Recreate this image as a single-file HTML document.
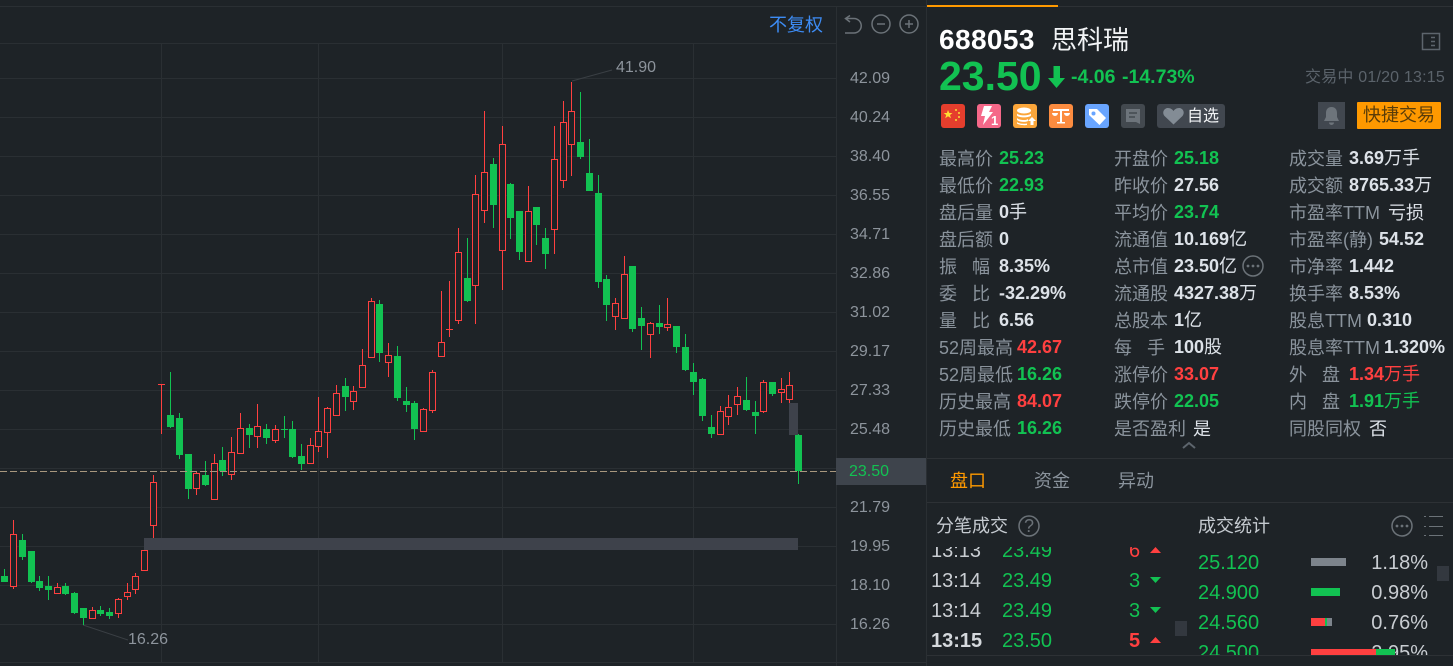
<!DOCTYPE html>
<html><head><meta charset="utf-8"><style>
html,body{margin:0;padding:0;background:#1e2327;width:1453px;height:666px;overflow:hidden}
body{position:relative;font-family:"Liberation Sans","Noto Sans CJK SC",sans-serif}
svg{position:absolute;left:0;top:0}
.t{position:absolute;white-space:nowrap;line-height:27px;height:27px;font-size:18px}
.l{color:#8a939c;margin-top:1px}
.v{font-size:18px;font-weight:bold;color:#dde2e8}
.g{color:#12c252}.r{color:#ff4040}
.v i{font-style:normal;font-weight:normal}
.a{position:absolute;left:850px;color:#8d949c;font-size:16px;line-height:20px;white-space:nowrap}
.n{position:absolute;font-size:20px;line-height:24px;white-space:nowrap}
#list,#stat{position:absolute;overflow:hidden;top:547px;height:108px}
#list{left:927px;width:250px}
#stat{left:1190px;width:245px}
</style></head><body>
<svg width="1453" height="666" viewBox="0 0 1453 666">
<path fill="none" stroke="#2a2f33" d="M0 6.5H927M0 43.5H836M0 78.5H836M0 117.5H836M0 156.5H836M0 195.5H836M0 234.5H836M0 273.5H836M0 312.5H836M0 351.5H836M0 390.5H836M0 429.5H836M0 468.5H836M0 507.5H836M0 546.5H836M0 585.5H836M0 624.5H836M0 662.5H926M161.5 43V662M318.5 43V662M502.5 43V662M693.5 43V662M836.5 7V666M926.5 0V666"/>
<path fill="none" stroke="#2d3135" stroke-width="1" d="M927 6.5H1453M927 458.5H1453M927 502.5H1453M927 655.5H1453"/>
<path stroke="#ff9900" stroke-width="2" d="M927 6H1058"/>
<path fill="none" stroke="#3a3f44" d="M83 625L128 640M572 81L612 70"/>
<path fill="none" stroke="#ff4040" d="M13.5 520V589M57.5 583V594M92.5 607V619M118.5 598V618M127.5 583V600M135.5 573V594M144.5 549V571M153.5 475V539M161.5 384V434M196.5 472V495M214.5 454V499M231.5 437V480M240.5 413V453M257.5 404V448M275.5 425V443M310.5 438V463M318.5 397V452M327.5 407V458M336.5 385V415M353.5 386V410M362.5 349V387M371.5 298V357M388.5 343V377M423.5 408V432M432.5 370V413M441.5 291V357M449.5 281V337M458.5 228V324M475.5 175V324M484.5 111V223M502.5 126V290M528.5 186V261M554.5 126V254M563.5 101V188M571.5 82V176M615.5 298V330M624.5 256V318M650.5 322V358M667.5 298V331M720.5 406V434M728.5 395V425M737.5 387V415M763.5 380V413M781.5 378V403M789.5 372V403M158 384.5H165M446 329.5H453"/>
<path fill="none" stroke="#12c252" d="M4.5 569V582M22.5 534V560M31.5 551V583M39.5 576V591M48.5 576V600M65.5 583V595M74.5 592V614M83.5 608V625M100.5 606V616M109.5 608V619M170.5 372V428M179.5 413V459M188.5 454V499M205.5 461V486M222.5 447V476M249.5 424V448M266.5 424V444M284.5 416V438M292.5 421V458M301.5 444V470M345.5 378V411M379.5 300V362M397.5 346V401M406.5 387V412M414.5 401V440M467.5 238V302M493.5 158V228M510.5 183V239M519.5 211V260M536.5 207V245M545.5 228V269M580.5 92V159M589.5 139V191M598.5 175V288M606.5 275V321M632.5 266V332M641.5 307V350M659.5 305V334M676.5 326V353M685.5 334V371M693.5 363V395M702.5 378V421M711.5 415V438M746.5 377V411M755.5 401V434M772.5 382V396M798.5 434V484M281 429.5H288"/>
<path fill="#1e2327" stroke="#ff4040" d="M10.5 534.5h6v52h-6zM54.5 587.5h6v6h-6zM89.5 610.5h6v8h-6zM115.5 599.5h6v14h-6zM124.5 592.5h6v4h-6zM132.5 576.5h6v13h-6zM141.5 550.5h6v20h-6zM150.5 482.5h6v43h-6zM193.5 473.5h6v15h-6zM211.5 463.5h6v36h-6zM228.5 452.5h6v22h-6zM237.5 428.5h6v25h-6zM254.5 426.5h6v10h-6zM272.5 429.5h6v11h-6zM307.5 445.5h6v18h-6zM315.5 431.5h6v15h-6zM324.5 408.5h6v24h-6zM333.5 393.5h6v22h-6zM350.5 391.5h6v10h-6zM359.5 365.5h6v22h-6zM368.5 301.5h6v56h-6zM385.5 355.5h6v7h-6zM420.5 409.5h6v22h-6zM429.5 372.5h6v38h-6zM438.5 342.5h6v14h-6zM455.5 252.5h6v68h-6zM472.5 194.5h6v91h-6zM481.5 172.5h6v38h-6zM499.5 144.5h6v106h-6zM525.5 211.5h6v50h-6zM551.5 159.5h6v70h-6zM560.5 122.5h6v58h-6zM568.5 111.5h6v33h-6zM612.5 303.5h6v13h-6zM621.5 274.5h6v44h-6zM647.5 323.5h6v11h-6zM664.5 324.5h6v3h-6zM717.5 411.5h6v23h-6zM725.5 407.5h6v9h-6zM734.5 396.5h6v8h-6zM760.5 382.5h6v29h-6zM778.5 389.5h6v3h-6zM786.5 385.5h6v14h-6z"/>
<path fill="#12c252" d="M1 576h7v6h-7zM19 540h7v17h-7zM28 551h7v31h-7zM36 581h7v7h-7zM45 586h7v4h-7zM62 586h7v8h-7zM71 593h7v20h-7zM80 608h7v10h-7zM97 610h7v4h-7zM106 612h7v4h-7zM167 415h7v12h-7zM176 418h7v37h-7zM185 454h7v35h-7zM202 475h7v10h-7zM219 460h7v11h-7zM246 428h7v7h-7zM263 429h7v9h-7zM289 429h7v28h-7zM298 456h7v8h-7zM342 386h7v11h-7zM376 304h7v49h-7zM394 356h7v42h-7zM403 401h7v4h-7zM411 403h7v26h-7zM464 278h7v23h-7zM490 164h7v41h-7zM507 184h7v34h-7zM516 211h7v41h-7zM533 207h7v18h-7zM542 238h7v16h-7zM577 142h7v15h-7zM586 173h7v18h-7zM595 193h7v89h-7zM603 279h7v26h-7zM629 266h7v63h-7zM638 318h7v8h-7zM656 323h7v4h-7zM673 326h7v21h-7zM682 347h7v23h-7zM690 372h7v10h-7zM699 379h7v37h-7zM708 427h7v7h-7zM743 400h7v10h-7zM752 412h7v4h-7zM769 382h7v12h-7zM795 435h7v36h-7z"/>
<path fill="#3e424b" d="M144 538H798V550H144zM789 403h9v32h-9z"/>
<path stroke="#a8977e" stroke-dasharray="7 3" d="M0 471.5H836"/>
<rect x="836" y="458" width="90" height="27" fill="#3e444c"/>
<g fill="none" stroke="#6b7278" stroke-width="1.5">
<path d="M850 15.500L845.500 18.500 850 22M846 18.500H854a7 7 0 0 1 0 14.500H845"/>
<circle cx="881" cy="24" r="9"/><path d="M877 24h8"/>
<circle cx="909" cy="24" r="9"/><path d="M905 24h8M909 20v8"/>
<rect x="1422.500" y="33.500" width="17" height="16" stroke="#5d656d"/><path stroke="#5d656d" d="M1431 37.500h4M1431 41.500h4M1431 45.500h4"/>
<circle cx="1253" cy="266" r="10" stroke="#6b7278"/>
<circle cx="1029" cy="526" r="10" stroke="#6b7278"/>
<circle cx="1402" cy="526" r="10" stroke="#6b7278"/>
<path stroke="#5d656d" stroke-width="2" d="M1183 448l6-5 6 5"/>
<path stroke="#6b7278" stroke-width="1" d="M1424 516.500h2M1429 516.500h14M1424 526.500h2M1429 526.500h14M1424 535.500h2M1429 535.500h14"/>
</g>
<g fill="#6b7278"><circle cx="1248" cy="266" r="1.400"/><circle cx="1253" cy="266" r="1.400"/><circle cx="1258" cy="266" r="1.400"/><circle cx="1397" cy="526" r="1.400"/><circle cx="1402" cy="526" r="1.400"/><circle cx="1407" cy="526" r="1.400"/></g>
<path fill="#12c252" d="M1053.500 66h6.500v12h5l-8.500 10-8.500-10h5.500z"/>
<rect x="941" y="104" width="24" height="24" rx="3" fill="#e53e2d"/>
<path fill="#ffdd33" d="M948 110l1.300 3h3.200l-2.500 2 1 3.200-3-1.900-2.800 1.900 1-3.200-2.500-2h3.200z"/>
<g fill="#f5b733"><rect x="955" y="109" width="2" height="2"/><rect x="958" y="112" width="2" height="2"/><rect x="958" y="116" width="2" height="2"/><rect x="955" y="119" width="2" height="2"/></g>
<rect x="977" y="104" width="24" height="24" rx="3" fill="#f56889"/>
<path fill="#fff" d="M984 106h8l-3 6h4l-10 13 2-9h-4z"/>
<text x="991" y="125" font-size="13" font-weight="bold" fill="#fff">1</text>
<rect x="1013" y="104" width="24" height="24" rx="3" fill="#fba63a"/>
<g fill="#fff"><ellipse cx="1024" cy="110.500" rx="7" ry="3"/><path d="M1017 113.500c2 2.500 12 2.500 14 0v2c-2 2.500-12 2.500-14 0zM1017 118c2 2.500 10 2.500 11 1v2c-2 1.500-9 1-11-1zM1017 122c2 2 8 2 10 1.500v1.500c-3 .5-8 0-10-1.500zM1032 117l4 4h-2.500v4h-3v-4H1028z"/></g>
<rect x="1049" y="104" width="24" height="24" rx="3" fill="#fc8c40"/>
<g fill="#fff"><path d="M1053 109h16v2h-16zM1060 109h2v13h-2zM1057 122h8v1.500h-8z"/><path d="M1052 113h6a3 3 0 0 1-6 0zM1064 113h6a3 3 0 0 1-6 0z"/></g>
<rect x="1085" y="104" width="24" height="24" rx="3" fill="#69a5ff"/>
<path fill="#fff" d="M1089 109h8l9 9-6.500 7-10.500-10z"/><circle cx="1093.500" cy="113.500" r="2" fill="#69a5ff"/>
<rect x="1121" y="104" width="24" height="24" rx="3" fill="#43494f"/>
<path fill="#6d747b" d="M1126 109h14v15l-4-2h-10z"/><path stroke="#43494f" stroke-width="1.500" d="M1129 113h8M1129 117h6"/>
<rect x="1157" y="104" width="68" height="24" rx="3" fill="#41474f"/>
<path fill="#838c95" d="M1173.500 124.500l-9-8.500c-3-4 0-8 3.500-8 2.500 0 4.500 1.500 5.500 3 1-1.500 3-3 5.500-3 3.500 0 6.500 4 3.500 8z"/>
<rect x="1318" y="102" width="27" height="27" fill="#41474f"/>
<path fill="#6d747b" d="M1331.500 107c4 0 5.500 3 5.500 6v4l2 4h-15l2-4v-4c0-3 1.500-6 5.500-6zM1329 122.500h5a2.500 2.500 0 0 1-5 0z"/>
<rect x="1357" y="102" width="84" height="27" rx="1" fill="#ff9900"/>
<rect x="1175" y="621" width="12" height="15" fill="#33383f"/>
<rect x="1437" y="566" width="12" height="15" fill="#33383f"/>
</svg>

<div class="a" style="left:850px;top:69px">42.09</div>
<div class="a" style="top:108px">40.24</div>
<div class="a" style="top:147px">38.40</div>
<div class="a" style="top:186px">36.55</div>
<div class="a" style="top:225px">34.71</div>
<div class="a" style="top:264px">32.86</div>
<div class="a" style="top:303px">31.02</div>
<div class="a" style="top:342px">29.17</div>
<div class="a" style="top:381px">27.33</div>
<div class="a" style="top:420px">25.48</div>
<div class="a" style="top:462px;left:849px;color:#12c252">23.50</div>
<div class="a" style="top:498px">21.79</div>
<div class="a" style="top:537px">19.95</div>
<div class="a" style="top:576px">18.10</div>
<div class="a" style="top:615px">16.26</div>
<div class="a" style="left:128px;top:630px">16.26</div>
<div class="a" style="left:616px;top:58px">41.90</div>
<div class="t" style="left:769px;top:12px;color:#3d8cf5">不复权</div>

<div class="t" style="left:939px;top:25px;font-size:28px;font-weight:bold;color:#fff;line-height:30px;height:30px;letter-spacing:.4px">688053</div>
<div class="t" style="left:1051px;top:25px;font-size:26px;color:#f2f4f6;line-height:30px;height:30px">思科瑞</div>
<div class="t g" style="left:939px;top:53px;font-size:41px;font-weight:bold;line-height:46px;height:46px">23.50</div>
<div class="t g" style="left:1071px;top:64px;font-size:19.500px;font-weight:bold">-4.06</div>
<div class="t g" style="left:1122px;top:64px;font-size:19.500px;font-weight:bold">-14.73%</div>
<div class="t" style="left:1305px;top:64px;font-size:16px;color:#5b636b;letter-spacing:.2px">交易中 01/20 13:15</div>
<div class="t" style="left:1187px;top:103px;font-size:16px;color:#f0f2f4">自选</div>
<div class="t" style="left:1363px;top:102px;font-size:18px;color:#5a3d08">快捷交易</div>

<div class="t l" style="left:939px;top:145px">最高价</div><div class="t v g" style="left:999px;top:145px">25.23</div>
<div class="t l" style="left:939px;top:172px">最低价</div><div class="t v g" style="left:999px;top:172px">22.93</div>
<div class="t l" style="left:939px;top:199px">盘后量</div><div class="t v" style="left:999px;top:199px">0<i>手</i></div>
<div class="t l" style="left:939px;top:226px">盘后额</div><div class="t v" style="left:999px;top:226px">0</div>
<div class="t l" style="left:939px;top:253px;letter-spacing:15px">振幅</div><div class="t v" style="left:999px;top:253px">8.35%</div>
<div class="t l" style="left:939px;top:280px;letter-spacing:15px">委比</div><div class="t v" style="left:999px;top:280px">-32.29%</div>
<div class="t l" style="left:939px;top:307px;letter-spacing:15px">量比</div><div class="t v" style="left:999px;top:307px">6.56</div>
<div class="t l" style="left:939px;top:334px">52周最高</div><div class="t v r" style="left:1017px;top:334px">42.67</div>
<div class="t l" style="left:939px;top:361px">52周最低</div><div class="t v g" style="left:1017px;top:361px">16.26</div>
<div class="t l" style="left:939px;top:388px">历史最高</div><div class="t v r" style="left:1017px;top:388px">84.07</div>
<div class="t l" style="left:939px;top:415px">历史最低</div><div class="t v g" style="left:1017px;top:415px">16.26</div>

<div class="t l" style="left:1114px;top:145px">开盘价</div><div class="t v g" style="left:1174px;top:145px">25.18</div>
<div class="t l" style="left:1114px;top:172px">昨收价</div><div class="t v" style="left:1174px;top:172px">27.56</div>
<div class="t l" style="left:1114px;top:199px">平均价</div><div class="t v g" style="left:1174px;top:199px">23.74</div>
<div class="t l" style="left:1114px;top:226px">流通值</div><div class="t v" style="left:1174px;top:226px">10.169<i>亿</i></div>
<div class="t l" style="left:1114px;top:253px">总市值</div><div class="t v" style="left:1174px;top:253px">23.50<i>亿</i></div>
<div class="t l" style="left:1114px;top:280px">流通股</div><div class="t v" style="left:1174px;top:280px">4327.38<i>万</i></div>
<div class="t l" style="left:1114px;top:307px">总股本</div><div class="t v" style="left:1174px;top:307px">1<i>亿</i></div>
<div class="t l" style="left:1114px;top:334px;letter-spacing:15px">每手</div><div class="t v" style="left:1174px;top:334px">100<i>股</i></div>
<div class="t l" style="left:1114px;top:361px">涨停价</div><div class="t v r" style="left:1174px;top:361px">33.07</div>
<div class="t l" style="left:1114px;top:388px">跌停价</div><div class="t v g" style="left:1174px;top:388px">22.05</div>
<div class="t l" style="left:1114px;top:415px">是否盈利</div><div class="t v" style="left:1193px;top:416px;font-weight:normal">是</div>

<div class="t l" style="left:1289px;top:145px">成交量</div><div class="t v" style="left:1349px;top:145px">3.69<i>万手</i></div>
<div class="t l" style="left:1289px;top:172px">成交额</div><div class="t v" style="left:1349px;top:172px">8765.33<i>万</i></div>
<div class="t l" style="left:1289px;top:199px">市盈率TTM</div><div class="t v" style="left:1388px;top:200px;font-weight:normal">亏损</div>
<div class="t l" style="left:1289px;top:226px">市盈率(静)</div><div class="t v" style="left:1379px;top:226px">54.52</div>
<div class="t l" style="left:1289px;top:253px">市净率</div><div class="t v" style="left:1349px;top:253px">1.442</div>
<div class="t l" style="left:1289px;top:280px">换手率</div><div class="t v" style="left:1349px;top:280px">8.53%</div>
<div class="t l" style="left:1289px;top:307px">股息TTM</div><div class="t v" style="left:1367px;top:307px">0.310</div>
<div class="t l" style="left:1289px;top:334px">股息率TTM</div><div class="t v" style="left:1384px;top:334px">1.320%</div>
<div class="t l" style="left:1289px;top:361px;letter-spacing:15px">外盘</div><div class="t v r" style="left:1349px;top:361px">1.34<i>万手</i></div>
<div class="t l" style="left:1289px;top:388px;letter-spacing:15px">内盘</div><div class="t v g" style="left:1349px;top:388px">1.91<i>万手</i></div>
<div class="t l" style="left:1289px;top:415px">同股同权</div><div class="t v" style="left:1369px;top:416px;font-weight:normal">否</div>

<div class="t" style="left:950px;top:468px;color:#ff9900">盘口</div>
<div class="t l" style="left:1034px;top:467px">资金</div>
<div class="t l" style="left:1118px;top:467px">异动</div>
<div class="t" style="left:936px;top:513px;color:#c5cad0">分笔成交</div>
<div class="t" style="left:1198px;top:513px;color:#c5cad0">成交统计</div>
<div class="t" style="left:1024px;top:513px;color:#6b7278;font-size:18px">?</div>

<div id="list">
<div class="n" style="left:4px;top:-8px;color:#c9cdd2">13:13</div><div class="n g" style="left:75px;top:-8px">23.49</div><div class="n r" style="left:202px;top:-8px">6</div>
<div class="n" style="left:4px;top:22px;color:#c9cdd2">13:14</div><div class="n g" style="left:75px;top:22px">23.49</div><div class="n g" style="left:202px;top:22px">3</div>
<div class="n" style="left:4px;top:52px;color:#c9cdd2">13:14</div><div class="n g" style="left:75px;top:52px">23.49</div><div class="n g" style="left:202px;top:52px">3</div>
<div class="n" style="left:4px;top:82px;color:#d5d9dd;font-weight:bold">13:15</div><div class="n g" style="left:75px;top:82px">23.50</div><div class="n r" style="left:202px;top:82px;font-weight:bold">5</div>
<svg width="250" height="108" viewBox="927 547 250 108"><path fill="#ff4040" d="M1150 553l5.500-6 5.500 6zM1150 643l5.500-6 5.500 6z"/><path fill="#12c252" d="M1150 577h11l-5.500 6zM1150 607h11l-5.500 6z"/></svg>
</div>
<div id="stat">
<div class="n g" style="left:8px;top:4px">25.120</div><div class="n" style="right:7px;top:4px;color:#c9cdd2">1.18%</div>
<div class="n g" style="left:8px;top:34px">24.900</div><div class="n" style="right:7px;top:34px;color:#c9cdd2">0.98%</div>
<div class="n g" style="left:8px;top:64px">24.560</div><div class="n" style="right:7px;top:64px;color:#c9cdd2">0.76%</div>
<div class="n g" style="left:8px;top:94px">24.500</div><div class="n" style="right:7px;top:94px;color:#c9cdd2">2.95%</div>
<svg width="245" height="108" viewBox="1190 547 245 108"><rect x="1311" y="558" width="35" height="8" fill="#7d848c"/><rect x="1311" y="588" width="29" height="8" fill="#12c252"/><rect x="1311" y="618" width="14" height="8" fill="#ff4040"/><rect x="1325" y="618" width="2" height="8" fill="#12c252"/><rect x="1327" y="618" width="5" height="8" fill="#7d848c"/><rect x="1311" y="649" width="65" height="8" fill="#ff4040"/><rect x="1376" y="649" width="19" height="8" fill="#12c252"/></svg>
</div>
</body></html>
